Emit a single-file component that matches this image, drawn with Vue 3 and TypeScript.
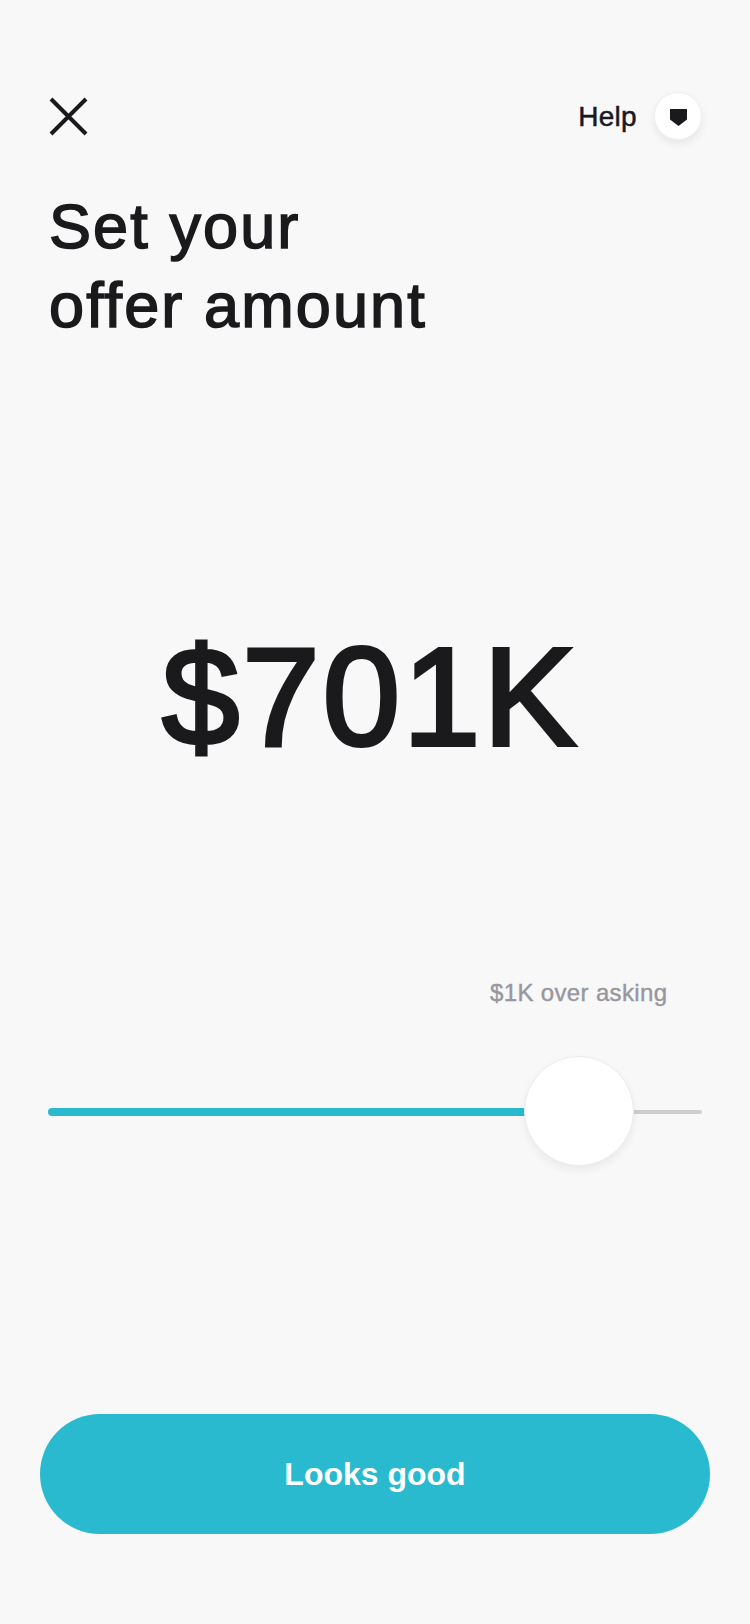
<template>
  <div class="screen">
    <header class="top">
      <button class="close" type="button" aria-label="Close">
        <svg width="40" height="40" viewBox="0 0 40 40">
          <path d="M3 3 L38 38 M38 3 L3 38" stroke="#1a1a1d" stroke-width="4" fill="none" />
        </svg>
      </button>
      <div class="help">
        <span class="help-label">Help</span>
        <div class="help-icon">
          <svg width="17" height="17" viewBox="0 0 17 17">
            <path d="M0 0 H17 V10.5 L8.5 17 L0 10.5 Z" fill="#1a1a1d" />
          </svg>
        </div>
      </div>
    </header>

    <h1>Set your<br />offer amount</h1>

    <div class="amount">{{ amount }}</div>

    <div class="slider-block">
      <div class="over">{{ overLabel }}</div>
      <div class="slider">
        <div class="fill" :style="{ width: thumbX + 'px' }"></div>
        <div class="rest"></div>
        <div class="thumb" :style="{ left: thumbX + 'px' }"></div>
      </div>
    </div>

    <button class="cta" type="button">Looks good</button>
  </div>
</template>

<script setup lang="ts">
const amount = '$701K'
const overLabel = '$1K over asking'
const thumbX = 531
</script>

<style>
html,
body {
  margin: 0;
  background: #f8f8f9;
}
</style>

<style scoped>
.screen {
  width: 750px;
  height: 1624px;
  box-sizing: border-box;
  padding: 92px 40px 90px;
  display: flex;
  flex-direction: column;
  background: #f8f8f9;
  color: #1a1a1d;
  font-family: "Liberation Sans", Arial, sans-serif;
}

.top {
  display: flex;
  justify-content: space-between;
  align-items: center;
  padding: 0 8px 0 8px;
  height: 48px;
}

.close {
  padding: 0;
  border: 0;
  background: none;
  width: 40px;
  height: 40px;
}

.close svg {
  display: block;
}

.help {
  display: flex;
  align-items: center;
  gap: 17px;
  font-size: 28px;
  letter-spacing: 0.3px;
  -webkit-text-stroke: 0.5px #1a1a1d;
}

.help-label {
  padding-top: 2px;
}

.help-icon {
  width: 48px;
  height: 48px;
  border-radius: 50%;
  background: #fff;
  border: 1px solid #f0f0f0;
  box-sizing: border-box;
  box-shadow: 0 4px 8px rgba(0, 0, 0, 0.07);
  display: flex;
  align-items: center;
  justify-content: center;
}

.help-icon svg {
  margin-top: 3px;
}

h1 {
  margin: 47px 0 0;
  padding-left: 9px;
  font-size: 63px;
  line-height: 79px;
  font-weight: 400;
  letter-spacing: 2.1px;
  -webkit-text-stroke: 1.6px #1a1a1d;
}

.amount {
  margin-top: 272px;
  text-align: center;
  font-size: 139px;
  line-height: 160px;
  letter-spacing: 3px;
  padding-right: 9px;
  -webkit-text-stroke: 4px #1a1a1d;
}

.slider-block {
  margin-top: 202px;
  padding: 0 8px;
}

.over {
  font-size: 24px;
  line-height: 28px;
  letter-spacing: 0.35px;
  color: #97979d;
  padding-left: 442px;
  -webkit-text-stroke: 0.4px #97979d;
}

.slider {
  position: relative;
  height: 108px;
  margin-top: 51px;
}

.fill {
  position: absolute;
  left: 0;
  top: 50px;
  height: 8px;
  border-radius: 4px 0 0 4px;
  background: #29bacf;
  z-index: 1;
}

.rest {
  position: absolute;
  left: 0;
  right: 0;
  top: 52px;
  height: 4px;
  border-radius: 2px;
  background: #d0cdce;
}

.thumb {
  position: absolute;
  top: 0;
  width: 110px;
  height: 110px;
  margin-left: -55px;
  margin-top: -2px;
  box-sizing: border-box;
  border-radius: 50%;
  background: #fff;
  border: 1px solid #ececec;
  box-shadow: 0 4px 8px rgba(0, 0, 0, 0.06);
  z-index: 2;
}

.cta {
  margin-top: auto;
  width: 670px;
  height: 120px;
  border: 0;
  border-radius: 60px;
  background: #29bacf;
  color: #fff;
  font-family: inherit;
  font-size: 32px;
  font-weight: 700;
}
</style>
